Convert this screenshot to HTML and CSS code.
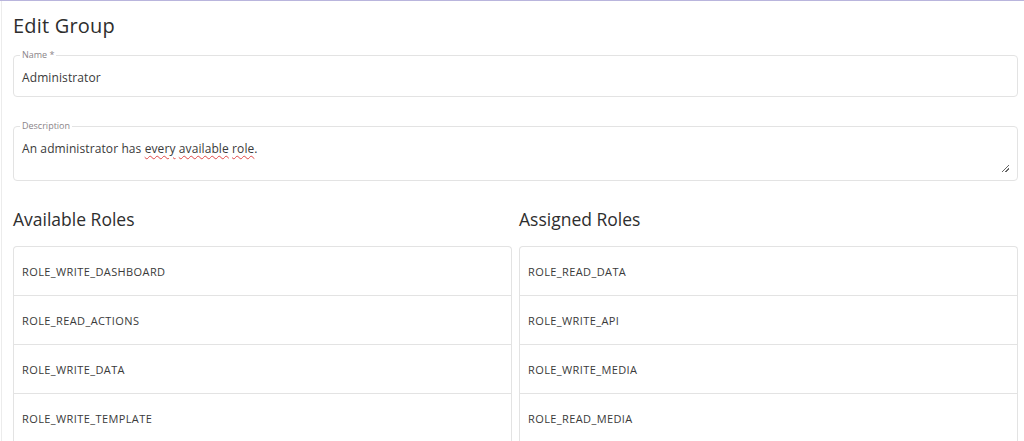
FILE: index.html
```html
<!DOCTYPE html>
<html lang="en">
<head>
<meta charset="utf-8">
<title>Edit Group</title>
<link rel="stylesheet" href="styles.css">
</head>
<body>
<div class="page">
  <h1 class="title">Edit Group</h1>
  <fieldset class="field field-name">
    <legend class="label">Name *</legend>
    <div class="value">Administrator</div>
  </fieldset>
  <fieldset class="field field-desc">
    <legend class="label">Description</legend>
    <div class="value">An administrator has <span class="spell">every</span> <span class="spell">available</span> <span class="spell">role</span>.</div>
    <div class="grip"></div>
  </fieldset>
  <div class="columns">
    <section class="col">
      <h2 class="col-title">Available Roles</h2>
      <ul class="list">
        <li class="row">ROLE_WRITE_DASHBOARD</li>
        <li class="row">ROLE_READ_ACTIONS</li>
        <li class="row">ROLE_WRITE_DATA</li>
        <li class="row">ROLE_WRITE_TEMPLATE</li>
      </ul>
    </section>
    <section class="col">
      <h2 class="col-title">Assigned Roles</h2>
      <ul class="list">
        <li class="row">ROLE_READ_DATA</li>
        <li class="row">ROLE_WRITE_API</li>
        <li class="row">ROLE_WRITE_MEDIA</li>
        <li class="row">ROLE_READ_MEDIA</li>
      </ul>
    </section>
  </div>
</div>
</body>
</html>
```
FILE: styles.css
```css
html, body {
  margin: 0;
  padding: 0;
  background: #fff;
  height: 100%;
  overflow: hidden;
}
body {
  border-top: 1px solid #b9b5dd;
  font-family: "Open Sans", "Noto Sans", sans-serif;
  color: #3a3a3a;
  box-sizing: border-box;
}
.page {
  margin-left: 1px;
  border-left: 1px solid #ececec;
  min-height: 100%;
  padding: 0 6px 0 11px;
  box-sizing: border-box;
}
.title {
  margin: 0;
  padding-top: 11px;
  font-size: 20px;
  font-weight: 400;
  line-height: 28px;
  color: #2e2e2e;
  letter-spacing: 0.2px;
}
.field {
  margin: 0;
  border: 1px solid #e3e3e3;
  border-radius: 4px;
  padding: 0 8px;
  position: relative;
}
.label {
  font-size: 9px;
  color: #8a8488;
  padding: 0 2px;
  margin-left: -2px;
  line-height: 10px;
}
.field-name {
  margin-top: 10px;
  height: 47px;
  box-sizing: border-box;
}
.field-name .value {
  font-size: 12px;
  line-height: 18px;
  padding-top: 9px;
  letter-spacing: 0.1px;
}
.field-desc {
  margin-top: 24px;
  height: 60px;
  box-sizing: border-box;
}
.field-desc .value {
  font-size: 12px;
  line-height: 18px;
  padding-top: 9px;
  letter-spacing: 0.1px;
}
.spell {
  text-decoration: underline wavy #e04848;
  text-decoration-thickness: 1px;
  text-underline-offset: 2px;
}
.grip {
  position: absolute;
  right: 8px;
  bottom: 8px;
  width: 7px;
  height: 7px;
  background: linear-gradient(135deg, transparent 45%, #666 45%, #666 55%, transparent 55%, transparent 70%, #666 70%, #666 80%, transparent 80%);
}
.columns {
  display: grid;
  grid-template-columns: 1fr 1fr;
  column-gap: 7px;
  margin-top: 26px;
}
.col-title {
  margin: 0 0 15px 0;
  font-size: 17.5px;
  font-weight: 400;
  line-height: 24px;
  color: #2e2e2e;
}
.list {
  list-style: none;
  margin: 0;
  padding: 0;
  border: 1px solid #e3e3e3;
  border-bottom: none;
  border-radius: 4px 4px 0 0;
}
.row {
  height: 49px;
  box-sizing: border-box;
  border-bottom: 1px solid #e3e3e3;
  display: flex;
  align-items: center;
  padding: 0 8px;
  font-size: 11px;
  color: #3a3a3a;
  letter-spacing: 0.4px;
}
```
